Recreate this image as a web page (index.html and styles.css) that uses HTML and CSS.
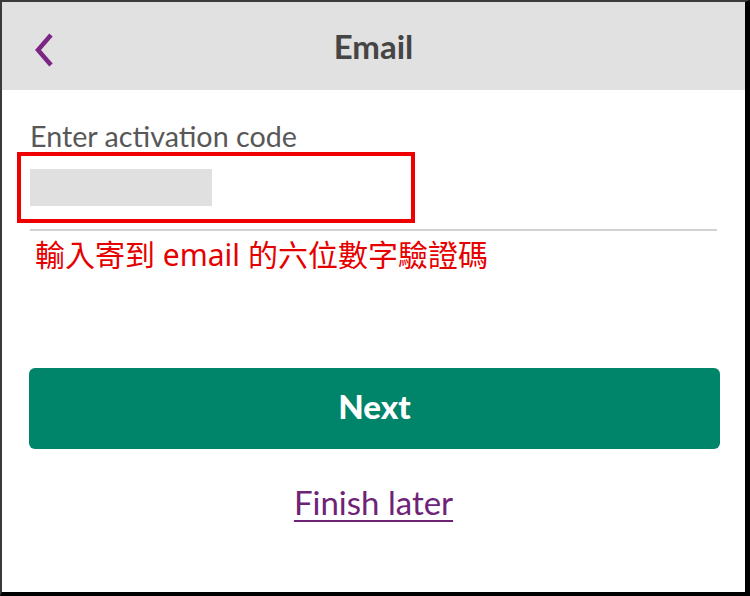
FILE: index.html
```html
<html lang="zh-Hant"><head>
    <meta charset="UTF-8">
    <meta name="viewport" content="width=device-width, initial-scale=1.0">
    <title>Email</title>
    <link rel="stylesheet" href="styles.css">
</head>
<body>

<div class="screen">
    <div class="topbar">
        <a class="back" href="#" aria-label="Back">
            <svg width="20" height="34" viewBox="0 0 20 34">
                <path d="M17 2 L4 17 L17 32" fill="none" stroke="#7b2585" stroke-width="4.5" stroke-linecap="butt" stroke-linejoin="miter"/>
            </svg>
        </a>
        <h1>Email</h1>
    </div>

    <div class="content">
        <label class="field-label" for="code">Enter activation code</label>
        <div class="field">
            <div class="code-mask"></div>
            <span class="mark-box"></span>
        </div>
        <p class="note">輸入寄到 email 的六位數字驗證碼</p>

        <button class="next-btn">Next</button>
        <a class="later" href="#">Finish later</a>
    </div>
</div>

</body></html>
```

FILE: styles.css
```css
* {
    margin: 0;
    box-sizing: border-box;
}

body {
    margin: 0;
    width: 750px;
    height: 596px;
    overflow: hidden;
    font-family: Lato, "Noto Sans", sans-serif;
    background: #fff;
}

.screen {
    width: 750px;
    height: 596px;
    border-top: 2px solid #3a3a3a;
    border-left: 2px solid #3a3a3a;
    border-right: 5px solid #000;
    border-bottom: 4px solid #000;
    background: #fff;
    display: flex;
    flex-direction: column;
}

.topbar {
    position: relative;
    height: 88px;
    background: #e1e1e1;
    display: flex;
    align-items: center;
    justify-content: center;
}

.topbar h1 {
    font-size: 33px;
    font-weight: bold;
    color: #454545;
    margin-top: 0;
}

.back {
    position: absolute;
    left: 32px;
    top: 31px;
    display: block;
    line-height: 0;
}

.content {
    padding: 29px 28px 0 28px;
}

.field-label {
    display: block;
    font-size: 28.7px;
    color: #585858;
    line-height: 34px;
}

.field {
    position: relative;
    height: 78px;
    padding-top: 16px;
    border-bottom: 2px solid #d2d2d2;
}

.code-mask {
    width: 182px;
    height: 37px;
    background: #e0e0e0;
}

/* red annotation frame over the input */
.mark-box {
    position: absolute;
    left: -13px;
    top: -1px;
    width: 398px;
    height: 71px;
    border: 4px solid #ee0000;
}

.note {
    margin-top: 4px;
    padding-left: 5px;
    font-family: "Noto Sans", "Noto Sans CJK TC", sans-serif;
    font-size: 30px;
    font-weight: normal;
    line-height: 40px;
    color: #e60000;
}

.next-btn {
    display: block;
    width: 691px;
    height: 81px;
    margin-top: 93px;
    margin-left: -1px;
    padding-bottom: 7px;
    border: none;
    border-radius: 6px;
    background: #00846a;
    color: #fff;
    font-family: Lato, sans-serif;
    font-size: 33px;
    font-weight: 900;
    cursor: pointer;
}

.later {
    display: block;
    width: max-content;
    margin: 33px auto 0;
    font-size: 33px;
    color: #6e2377;
    text-decoration: underline;
    text-decoration-thickness: 2px;
    text-underline-offset: 5px;
}
```
